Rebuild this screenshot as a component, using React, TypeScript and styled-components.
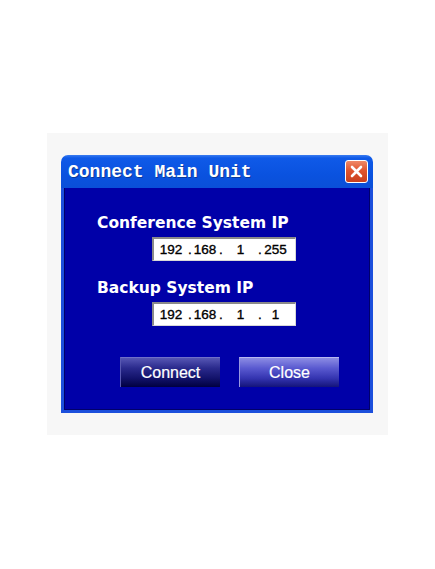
import React from 'react'
import styled, { createGlobalStyle } from 'styled-components'

const GlobalStyle = createGlobalStyle`
    html, body {
        margin: 0;
        padding: 0;
        background: #ffffff;
    }
`

const Stage = styled.div`
    padding: 133px 0 0 47px;
`

const Panel = styled.div`
    width: 341px;
    height: 302px;
    box-sizing: border-box;
    background: #f7f7f7;
    padding: 22px 15px 22px 14px;
`

const Dialog = styled.div`
    width: 312px;
    height: 258px;
    display: flex;
    flex-direction: column;
`

const TitleBar = styled.div`
    height: 33px;
    flex: none;
    display: flex;
    align-items: center;
    justify-content: space-between;
    padding: 0 5px 0 7px;
    border-radius: 7px 7px 0 0;
    background: linear-gradient(#3a7cf0 0px, #0f5ae8 3px, #0a52df 60%, #0a4fd8 100%);
`

const Title = styled.span`
    font-family: "Liberation Mono", "DejaVu Sans Mono", monospace;
    font-size: 18px;
    font-weight: bold;
    color: #ffffff;
    text-shadow: 1px 1px 0 #0a3a9a;
`

const CloseBox = styled.div`
    width: 23px;
    height: 23px;
    box-sizing: border-box;
    border: 1px solid #ffffff;
    border-radius: 3px;
    background: linear-gradient(#f08a68, #e0552f 45%, #c8401e);
    display: flex;
    align-items: center;
    justify-content: center;
`

const Body = styled.div`
    flex: 1;
    background: #0000a8;
    border: 3px solid #1c4fdc;
    border-top: none;
    box-shadow: inset 1px 0 0 #00006a, inset -1px 0 0 #00006a, inset 0 -1px 0 #00006a;
    padding: 26px 0 0 33px;
    display: flex;
    flex-direction: column;
    align-items: flex-start;
`

const Label = styled.div<{ $gap: number }>`
    margin-top: ${p => p.$gap}px;
    font-family: "DejaVu Sans", Verdana, sans-serif;
    font-weight: bold;
    font-size: 15.5px;
    line-height: 18px;
    color: #ffffff;
`

const IpField = styled.div`
    margin: 5px 0 0 55px;
    width: 144px;
    height: 24px;
    box-sizing: border-box;
    background: #ffffff;
    border-top: 2px solid #8a8a8a;
    border-left: 2px solid #8a8a8a;
    border-right: 1px solid #d8d8d8;
    border-bottom: 1px solid #d8d8d8;
    display: grid;
    grid-template-columns: 34px 4px 26px 6px 33px 6px 25px;
    align-items: center;
`

const IpPart = styled.span`
    display: flex;
    justify-content: center;
    font-family: "Liberation Sans", Arial, sans-serif;
    font-size: 13.5px;
    line-height: 16px;
    color: #000000;
    -webkit-text-stroke: 0.35px #000000;
`

const ButtonRow = styled.div`
    margin: 31px 0 0 23px;
    display: flex;
    gap: 19px;
`

const Button = styled.div<{ $light?: boolean }>`
    width: 100px;
    height: 30px;
    box-sizing: border-box;
    display: flex;
    align-items: center;
    justify-content: center;
    font-family: "Liberation Sans", Arial, sans-serif;
    font-size: 16px;
    color: #ffffff;
    -webkit-text-stroke: 0.2px #ffffff;
    border-top: 1px solid ${p => (p.$light ? '#b8b8f0' : '#7070c8')};
    border-left: 1px solid ${p => (p.$light ? '#9898e0' : '#5858b0')};
    background: ${p =>
        p.$light
            ? 'linear-gradient(#8c8ce4 0%, #5a5ad0 35%, #3434b0 70%, #14147a 100%)'
            : 'linear-gradient(#5656b4 0%, #2a2a8c 35%, #12126a 70%, #000040 100%)'};
`

const ipRows = [
    { label: 'Conference System IP', gap: 0, octets: ['192', '168', '1', '255'] },
    { label: 'Backup System IP', gap: 18, octets: ['192', '168', '1', '1'] },
]

const App = () => {
    return (
        <Stage>
            <GlobalStyle />
            <Panel>
                <Dialog>
                    <TitleBar>
                        <Title>Connect Main Unit</Title>
                        <CloseBox>
                            <svg width="15" height="15" viewBox="0 0 15 15">
                                <path d="M3 3 L12 12 M12 3 L3 12" stroke="#ffffff" strokeWidth="2.6" strokeLinecap="round" />
                            </svg>
                        </CloseBox>
                    </TitleBar>
                    <Body>
                        {ipRows.map(row => (
                            <React.Fragment key={row.label}>
                                <Label $gap={row.gap}>{row.label}</Label>
                                <IpField>
                                    {row.octets.map((o, i) => (
                                        <React.Fragment key={i}>
                                            {i > 0 && <IpPart>.</IpPart>}
                                            <IpPart>{o}</IpPart>
                                        </React.Fragment>
                                    ))}
                                </IpField>
                            </React.Fragment>
                        ))}
                        <ButtonRow>
                            <Button>Connect</Button>
                            <Button $light>Close</Button>
                        </ButtonRow>
                    </Body>
                </Dialog>
            </Panel>
        </Stage>
    )
}

export default App
